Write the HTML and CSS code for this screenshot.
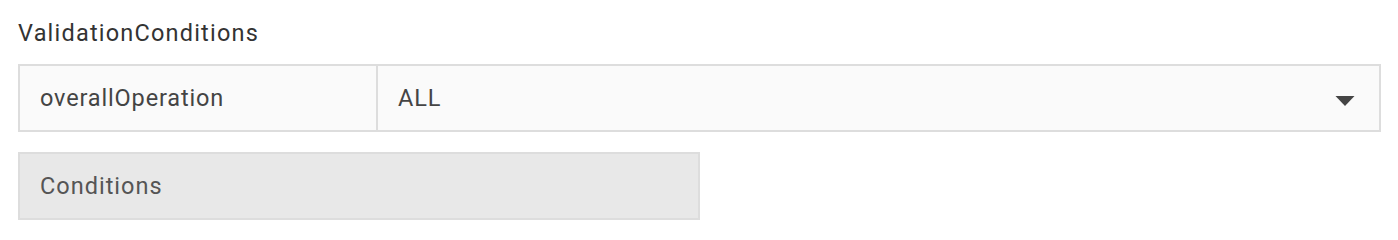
FILE: index.html
```html
<!DOCTYPE html>
<html>
<head>
<meta charset="utf-8">
<link rel="stylesheet" href="styles.css">
</head>
<body>
<div class="page">
  <div class="title">ValidationConditions</div>
  <div class="table">
    <div class="cell key">overallOperation</div>
    <div class="cell value">
      <span>ALL</span>
      <svg class="arrow" width="20" height="10" viewBox="0 0 20 10"><path d="M0.5 0 L19.5 0 L10 10 Z" fill="#444"/></svg>
    </div>
  </div>
  <div class="section">Conditions</div>
</div>
</body>
</html>
```
FILE: styles.css
```css
html, body {
  margin: 0;
  padding: 0;
  background: #fff;
}
.page {
  padding: 18px 18px 0 18px;
  font-family: Roboto, "Noto Sans", sans-serif;
}
.title {
  font-size: 23.5px;
  letter-spacing: 1.2px;
  line-height: 30px;
  color: #333;
  height: 30px;
  margin-bottom: 16px;
}
.table {
  display: flex;
  width: 1363px;
  height: 68px;
  box-sizing: border-box;
  border: 2px solid #dddddd;
  background: #fafafa;
}
.cell {
  display: flex;
  align-items: center;
  padding: 0 20px;
  font-size: 23.5px;
  letter-spacing: 0.85px;
  color: #444;
}
.key {
  width: 358px;
  box-sizing: border-box;
  border-right: 2px solid #dddddd;
}
.value {
  flex: 1;
  justify-content: space-between;
  padding-right: 24px;
}
.arrow {
  margin-top: 6px;
}
.section {
  margin-top: 20px;
  width: 682px;
  height: 68px;
  box-sizing: border-box;
  border: 2px solid #dddddd;
  background: #e8e8e8;
  display: flex;
  align-items: center;
  padding: 0 20px;
  font-size: 23.5px;
  letter-spacing: 1px;
  color: #555;
}
```
